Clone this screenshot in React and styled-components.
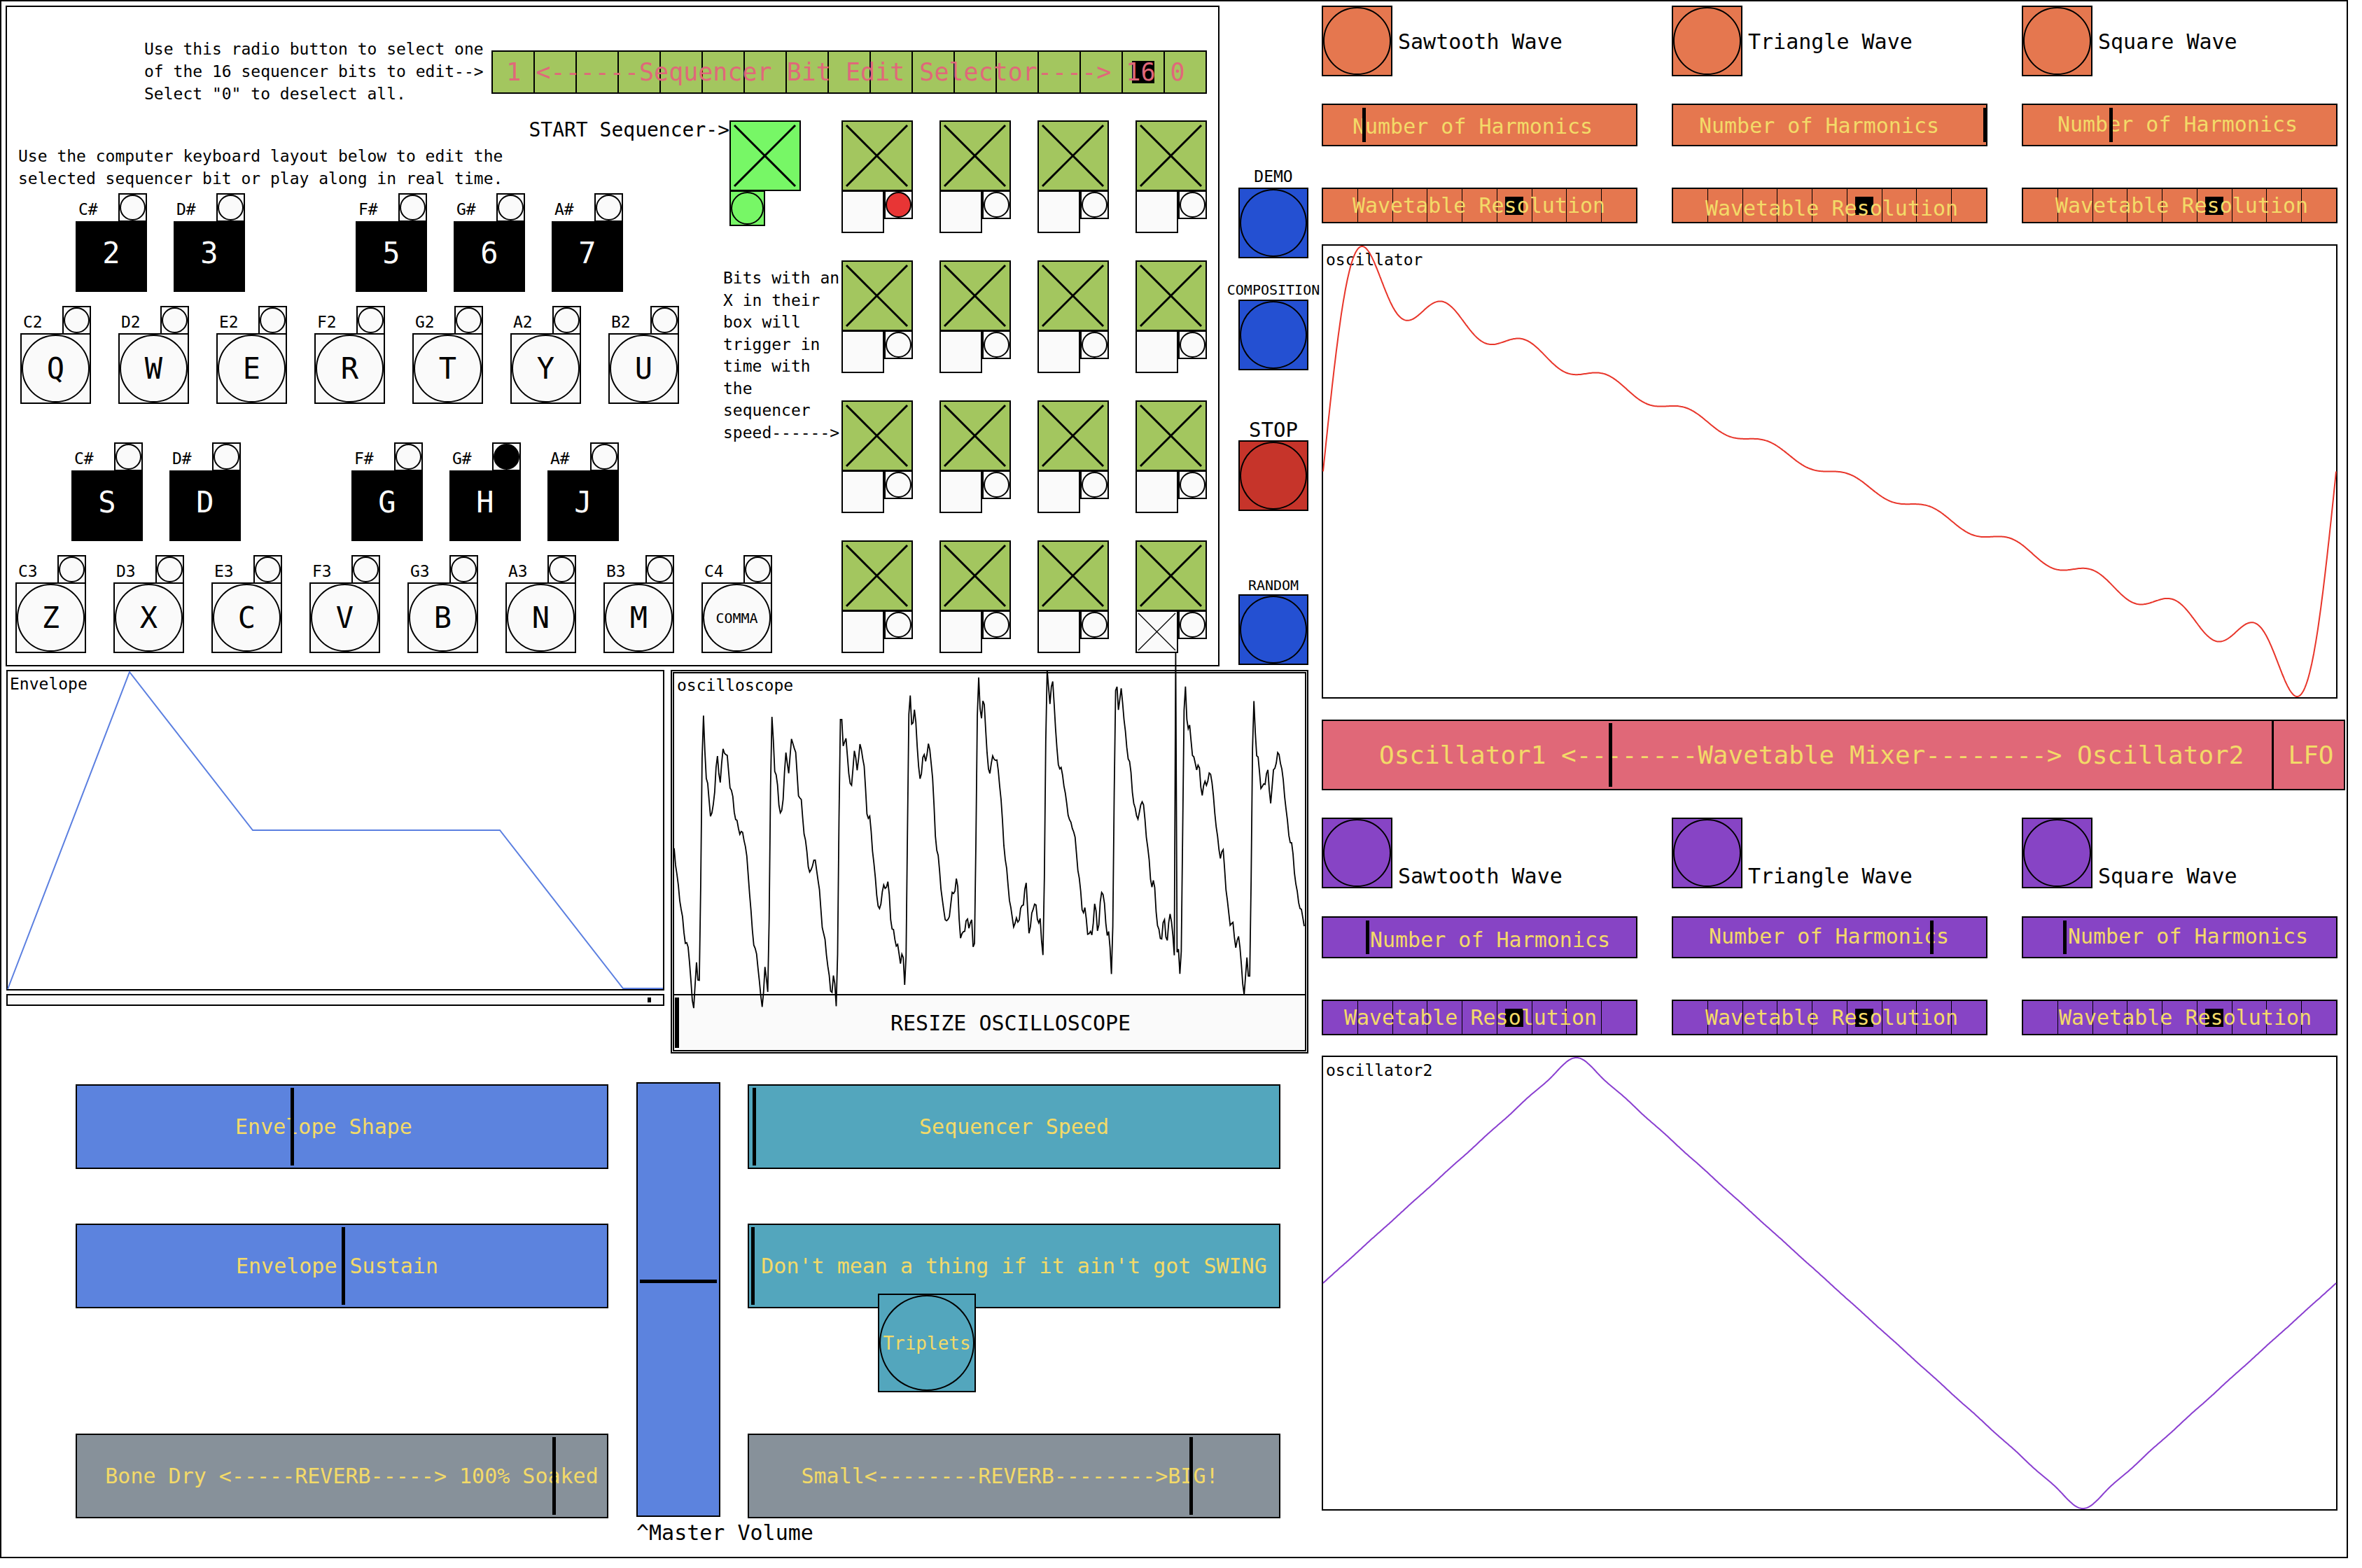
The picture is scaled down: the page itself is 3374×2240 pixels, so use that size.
import React from "react";
import styled, { createGlobalStyle } from "styled-components";

const C = {
  orange: "#e5774f",
  purple: "#8744c5",
  pink: "#e06878",
  yellow: "#f3da68",
  seqGreen: "#a3c65f",
  startGreen: "#77f766",
  btnBlue: "#2450d2",
  stopRed: "#c6342a",
  redDot: "#e83535",
  sliderBlue: "#5c83de",
  teal: "#53a6bd",
  gray: "#87919a",
  light: "#fafafa",
  selText: "#e0687a",
  envLine: "#5b7fe0",
  oscRed: "#e8352a",
  oscPurple: "#8a3fd0",
};

const Global = createGlobalStyle`
  html, body { margin: 0; padding: 0; background: #fff; }
  body { font-family: "DejaVu Sans Mono", "Liberation Mono", monospace; color: #000; }
  * { box-sizing: border-box; }
`;

/* ---------- computed drawings ---------- */
const SAW_PATH = (() => {
  const W = 1447, H = 645, N = 12, S = 1000;
  const vals = [];
  for (let i = 0; i <= S; i++) {
    const th = (2 * Math.PI * i) / S;
    let v = 0;
    for (let k = 1; k <= N; k++) v += Math.sin(k * th) / k;
    vals.push(v);
  }
  const m = Math.max(...vals.map(Math.abs));
  return vals
    .map((v, i) => `${i ? "L" : "M"}${((i / S) * W).toFixed(1)},${(H / 2 - (v / m) * (H / 2 - 1)).toFixed(1)}`)
    .join("");
})();

const TRI_PATH = (() => {
  const W = 1447, H = 646, S = 800;
  const vals = [];
  for (let i = 0; i <= S; i++) {
    const th = (2 * Math.PI * i) / S;
    let v = 0;
    for (let n = 1; n <= 25; n += 2) v += (((n - 1) / 2) % 2 ? -1 : 1) * Math.sin(n * th) / (n * n);
    vals.push(v);
  }
  const m = Math.max(...vals.map(Math.abs));
  return vals
    .map((v, i) => `${i ? "L" : "M"}${((i / S) * W).toFixed(1)},${(H / 2 - (v / m) * (H / 2 - 1)).toFixed(1)}`)
    .join("");
})();

const SCOPE_PATH = (() => {
  const W = 903;
  let s = 98765;
  const rnd = () => {
    s = (s * 16807) % 2147483647;
    return s / 2147483647;
  };
  const K = 14;
  const amps = Array.from({ length: K }, (_, k) => (1 / (k + 1)) * (0.6 + 0.9 * rnd()));
  const ph = Array.from({ length: K }, () => (rnd() - 0.5) * 1.2);
  const pts = [];
  for (let x = 0; x <= W; x += 2) {
    const th = (2 * Math.PI * (x + 60)) / 98.5;
    let v = 0;
    for (let k = 1; k <= K; k++) {
      v += amps[k - 1] * Math.sin(k * th + ph[k - 1] * Math.sin(x / 140 + k));
    }
    v += 0.22 * Math.sin((2 * Math.PI * x) / 33 + 0.7 * Math.sin(x / 57));
    pts.push([x, v]);
  }
  const m = Math.max(...pts.map((p) => Math.abs(p[1])));
  return pts
    .map(([x, v], i) => {
      let y = 245 - (v / m) * 250;
      if (x === 718) y = -30;
      return `${i ? "L" : "M"}${x},${y.toFixed(1)}`;
    })
    .join("");
})();

/* ---------- shared primitives ---------- */
const Ellipse = styled.div`
  width: 100%;
  height: 100%;
  border-radius: 50%;
  border: 2px solid #000;
  background: ${(p) => p.$fill || "transparent"};
  display: flex;
  align-items: center;
  justify-content: center;
`;

const CrossSvg = styled.svg`
  display: block;
  width: 100%;
  height: 100%;
`;

function Cross({ thin }) {
  return thin ? (
    <CrossSvg viewBox="0 0 57 57" preserveAspectRatio="none">
      <line x1="2" y1="2" x2="55" y2="55" stroke="#000" strokeWidth="1.3" />
      <line x1="55" y1="2" x2="2" y2="55" stroke="#000" strokeWidth="1.3" />
    </CrossSvg>
  ) : (
    <CrossSvg viewBox="0 0 98 97" preserveAspectRatio="none">
      <line x1="5" y1="5" x2="92" y2="92" stroke="#000" strokeWidth="3" />
      <line x1="92" y1="5" x2="5" y2="92" stroke="#000" strokeWidth="3" />
    </CrossSvg>
  );
}

/* ---------- layout ---------- */
const Frame = styled.div`
  width: 3354px;
  height: 2226px;
  border: 2px solid #000;
  display: flex;
  align-items: flex-start;
  background: #fff;
`;

const LeftCol = styled.div`
  width: 1886px;
  flex-shrink: 0;
  display: flex;
  flex-direction: column;
`;

const TopRow = styled.div`
  display: flex;
  align-items: flex-start;
  margin: 6px 0 0 6px;
`;

const Panel = styled.div`
  width: 1734px;
  height: 944px;
  border: 2px solid #000;
  display: flex;
  flex-direction: column;
  flex-shrink: 0;
`;

const HeaderRow = styled.div`
  display: flex;
  align-items: flex-start;
  padding-left: 196px;
  margin-top: 44px;
`;

const InstrText = styled.div`
  width: 496px;
  font-size: 23px;
  line-height: 32px;
  white-space: pre;
`;

const SelectorBar = styled.div`
  position: relative;
  margin-top: 18px;
  width: 1022px;
  height: 62px;
  border: 2px solid #000;
  background: ${C.seqGreen};
  display: flex;
`;

const SelectorCell = styled.div`
  flex: 1;
  display: flex;
  align-items: center;
  justify-content: center;
  & + & {
    border-left: 2px solid #000;
  }
`;

const SelectorMark = styled.div`
  width: 32px;
  height: 32px;
  background: #000;
`;

const SelectorText = styled.div`
  position: absolute;
  inset: 0;
  display: flex;
  align-items: center;
  justify-content: center;
  padding-right: 10px;
  color: ${C.selText};
  font-size: 35px;
  white-space: pre;
`;

const BodyRow = styled.div`
  display: flex;
  align-items: flex-start;
`;

const KeyboardCol = styled.div`
  width: 1022px;
  flex-shrink: 0;
  display: flex;
  flex-direction: column;
`;

const Hint = styled.div`
  margin: 57px 0 0 16px;
  font-size: 23px;
  line-height: 32px;
  white-space: pre;
`;

const KeyRow = styled.div`
  display: flex;
  margin-top: ${(p) => p.$mt}px;
  padding-left: ${(p) => p.$pl}px;
  gap: ${(p) => p.$gap}px;
`;

const KeyUnit = styled.div`
  width: ${(p) => p.$w}px;
  margin-left: ${(p) => p.$ml || 0}px;
  flex-shrink: 0;
  display: flex;
  flex-direction: column;
`;

const KeyTop = styled.div`
  display: flex;
  justify-content: space-between;
  align-items: center;
  height: 41px;
`;

const NoteLabel = styled.span`
  font-size: 23px;
  line-height: 23px;
  padding: 5px 0 0 4px;
`;

const KeyRadio = styled.div`
  width: 41px;
  height: 41px;
  border: 2px solid #000;
  background: ${C.light};
`;

const BlackKey = styled.div`
  height: 101px;
  margin-top: -1px;
  background: #000;
  color: #fff;
  display: flex;
  align-items: center;
  justify-content: center;
  padding-bottom: 10px;
  font-size: 42px;
`;

const WhiteKey = styled.div`
  height: 101px;
  margin-top: -2px;
  border: 2px solid #000;
  background: ${C.light};
`;

const KeyLetter = styled.span`
  font-size: ${(p) => p.$fs || 42}px;
`;

const SeqGrid = styled.div`
  margin-top: 22px;
  display: grid;
  grid-template-columns: 132px repeat(4, 102px);
  grid-template-rows: repeat(4, 160px);
  column-gap: 38px;
  row-gap: 40px;
`;

const StartLead = styled.div`
  grid-column: 1;
  grid-row: 1;
  display: flex;
  justify-content: flex-end;
  align-items: flex-start;
`;

const StartLabel = styled.span`
  flex-shrink: 0;
  white-space: nowrap;
  font-size: 28px;
  line-height: 28px;
`;

const StartUnit = styled.div`
  flex-shrink: 0;
  width: 102px;
  margin-right: 20px;
  display: flex;
  flex-direction: column;
`;

const StartBox = styled.div`
  height: 101px;
  border: 2px solid #000;
  background: ${C.startGreen};
`;

const StartRadio = styled.div`
  width: 51px;
  height: 51px;
  margin-top: -1px;
  border: 2px solid #000;
  background: ${C.startGreen};
`;

const BitsText = styled.div`
  grid-column: 1;
  grid-row: 2 / span 3;
  margin-top: 10px;
  padding-left: 1px;
  font-size: 23px;
  line-height: 31.5px;
  white-space: pre;
`;

const CellUnit = styled.div`
  grid-column: ${(p) => p.$col};
  grid-row: ${(p) => p.$row};
  display: flex;
  flex-direction: column;
`;

const CellBox = styled.div`
  height: 101px;
  border: 2px solid #000;
  background: ${C.seqGreen};
`;

const CellBottom = styled.div`
  display: flex;
  align-items: flex-start;
  margin-top: -1px;
`;

const CellPad = styled.div`
  width: 61px;
  height: 61px;
  border: 2px solid #000;
  background: ${C.light};
`;

const CellRadio = styled.div`
  width: 41px;
  height: 41px;
  border: 2px solid #000;
  background: ${C.light};
`;

const SideCol = styled.div`
  margin-left: 11px;
  width: 132px;
  flex-shrink: 0;
  display: flex;
  flex-direction: column;
  align-items: center;
`;

const SideGroup = styled.div`
  margin-top: ${(p) => p.$mt}px;
  display: flex;
  flex-direction: column;
  align-items: center;
`;

const SideLabel = styled.div`
  font-size: ${(p) => p.$fs}px;
  line-height: ${(p) => p.$fs}px;
  margin-bottom: ${(p) => p.$mb}px;
  white-space: nowrap;
`;

const SideButton = styled.div`
  width: 100px;
  height: 101px;
  border: 2px solid #000;
  background: ${(p) => p.$bg};
`;

const MidRow = styled.div`
  display: flex;
  align-items: flex-start;
  margin-top: 5px;
  padding-left: 7px;
`;

const EnvCol = styled.div`
  width: 940px;
  flex-shrink: 0;
  display: flex;
  flex-direction: column;
`;

const ChartBox = styled.div`
  position: relative;
  width: ${(p) => (p.$w ? `${p.$w}px` : "100%")};
  height: ${(p) => p.$h}px;
  margin-top: ${(p) => p.$mt || 0}px;
  border: 2px solid #000;
  background: #fff;
  flex-shrink: 0;
`;

const ChartLabel = styled.div`
  font-size: 23px;
  line-height: 27.6px;
  padding: ${(p) => p.$pt}px 0 0 ${(p) => p.$pl}px;
`;

const Plot = styled.svg`
  position: absolute;
  left: 0;
  top: 0;
  width: 100%;
  height: 100%;
  overflow: visible;
`;

const EnvScroll = styled.div`
  margin-top: 5px;
  height: 17px;
  border: 2px solid #000;
  background: ${C.light};
  display: flex;
  justify-content: flex-end;
  align-items: center;
  padding-right: 17px;
`;

const EnvScrollMark = styled.div`
  width: 5px;
  height: 7px;
  background: #000;
`;

const ScopeOuter = styled.div`
  margin-left: 9px;
  width: 911px;
  height: 548px;
  border: 2px solid #000;
  padding: 1px;
  flex-shrink: 0;
`;

const ScopeInner = styled.div`
  height: 100%;
  border: 2px solid #000;
  display: flex;
  flex-direction: column;
`;

const ScopeArea = styled.div`
  position: relative;
  flex: 1;
  border-bottom: 2px solid #000;
`;

const ResizeBar = styled.div`
  height: 78px;
  background: ${C.light};
  display: flex;
  align-items: center;
`;

const ResizeThumb = styled.div`
  width: 6px;
  height: 72px;
  margin-left: 1px;
  background: #000;
`;

const ResizeText = styled.span`
  margin-left: 302px;
  font-size: 30px;
  white-space: pre;
`;

const BottomRow = styled.div`
  display: flex;
  align-items: flex-start;
  margin-top: 41px;
  padding-left: 106px;
`;

const SliderCol = styled.div`
  width: 761px;
  margin-left: ${(p) => p.$ml || 0}px;
  margin-top: 3px;
  flex-shrink: 0;
  display: flex;
  flex-direction: column;
`;

const HSlider = styled.div`
  position: relative;
  width: ${(p) => p.$w}px;
  height: ${(p) => p.$h}px;
  margin-top: ${(p) => p.$mt || 0}px;
  border: 2px solid #000;
  background: ${(p) => p.$bg};
  display: flex;
  align-items: center;
  justify-content: center;
  flex-shrink: 0;
`;

const SliderText = styled.span`
  color: ${C.yellow};
  font-size: ${(p) => p.$fs || 30}px;
  white-space: pre;
  transform: translate(${(p) => p.$dx || 0}px, ${(p) => p.$dy || 0}px);
`;

const Thumb = styled.div`
  position: absolute;
  top: ${(p) => p.$inset}px;
  bottom: ${(p) => p.$inset}px;
  width: 5px;
  background: #000;
`;

const MasterCol = styled.div`
  margin-left: 40px;
  width: 120px;
  flex-shrink: 0;
  display: flex;
  flex-direction: column;
`;

const VSlider = styled.div`
  position: relative;
  height: 621px;
  border: 2px solid #000;
  background: ${C.sliderBlue};
`;

const VThumb = styled.div`
  position: absolute;
  left: 3px;
  right: 3px;
  height: 5px;
  background: #000;
`;

const MasterLabel = styled.div`
  margin-top: 8px;
  font-size: 30px;
  line-height: 30px;
  white-space: nowrap;
`;

const TripletsBox = styled.div`
  position: relative;
  width: 140px;
  height: 141px;
  margin: -21px 0 0 186px;
  border: 2px solid #000;
  background: ${C.teal};
`;

const TripletsText = styled.span`
  color: ${C.yellow};
  font-size: 26px;
`;

const RightCol = styled.div`
  flex: 1;
  display: flex;
  flex-direction: column;
  padding-top: 6px;
`;

const WaveRow = styled.div`
  display: flex;
  margin-top: ${(p) => p.$mt}px;
`;

const WaveOption = styled.div`
  width: 500px;
  flex-shrink: 0;
  display: flex;
  align-items: ${(p) => p.$align};
`;

const WaveBox = styled.div`
  width: 101px;
  height: 101px;
  border: 2px solid #000;
  background: ${(p) => p.$bg};
  flex-shrink: 0;
`;

const WaveLabel = styled.span`
  margin-left: 8px;
  font-size: 30px;
  line-height: 30px;
  white-space: pre;
  padding-top: ${(p) => p.$pt || 0}px;
  padding-bottom: ${(p) => p.$pb || 0}px;
`;

const BarRow = styled.div`
  display: flex;
  gap: 49px;
  margin-top: ${(p) => p.$mt}px;
`;

const WtBar = styled.div`
  position: relative;
  width: 451px;
  height: 51px;
  border: 2px solid #000;
  background: ${(p) => p.$bg};
  display: flex;
  flex-shrink: 0;
`;

const WtCell = styled.div`
  flex: 1;
  display: flex;
  align-items: center;
  justify-content: center;
  & + & {
    border-left: 1px solid #000;
  }
`;

const WtMark = styled.div`
  width: 26px;
  height: 26px;
  background: #000;
`;

const BarTextLayer = styled.div`
  position: absolute;
  inset: 0;
  display: flex;
  align-items: center;
  justify-content: center;
`;

const Mixer = styled.div`
  margin-top: 30px;
  width: 1462px;
  height: 101px;
  border: 2px solid #000;
  background: ${C.pink};
  display: flex;
`;

const MixMain = styled.div`
  position: relative;
  flex: 1;
  display: flex;
  align-items: center;
  padding-left: 80px;
`;

const MixText = styled.span`
  color: ${C.yellow};
  font-size: 36px;
  white-space: pre;
`;

const MixLfo = styled.div`
  width: 103px;
  border-left: 3px solid #000;
  display: flex;
  align-items: center;
  justify-content: center;
  color: ${C.yellow};
  font-size: 36px;
  padding-left: 6px;
`;

/* ---------- data ---------- */
const BLACK1 = [
  ["C#", "2"],
  ["D#", "3"],
  ["F#", "5", 120],
  ["G#", "6"],
  ["A#", "7"],
];
const BLACK2 = [
  ["C#", "S"],
  ["D#", "D"],
  ["F#", "G", 120],
  ["G#", "H", 0, true],
  ["A#", "J"],
];
const WHITE1 = [
  ["C2", "Q"],
  ["D2", "W"],
  ["E2", "E"],
  ["F2", "R"],
  ["G2", "T"],
  ["A2", "Y"],
  ["B2", "U"],
];
const WHITE2 = [
  ["C3", "Z"],
  ["D3", "X"],
  ["E3", "C"],
  ["F3", "V"],
  ["G3", "B"],
  ["A3", "N"],
  ["B3", "M"],
  ["C4", "COMMA", 0, false, 20],
];

const WAVES = ["Sawtooth Wave", "Triangle Wave", "Square Wave"];
const HARM1 = [
  { thumb: 56, dx: -10, dy: 2 },
  { thumb: 443, dx: -15, dy: 1 },
  { thumb: 123, dx: -3, dy: -1 },
];
const HARM2 = [
  { thumb: 61, dx: 15, dy: 3 },
  { thumb: 367, dx: -1, dy: -2 },
  { thumb: 57, dx: 12, dy: -2 },
];
const WT1 = [{ dx: -1, dy: 0 }, { dx: 3, dy: 4 }, { dx: 3, dy: 0 }];
const WT2 = [{ dx: -13, dy: 0 }, { dx: 3, dy: 0 }, { dx: 8, dy: 0 }];

function BlackKeyItem({ note, keyName, ml, on }) {
  return (
    <KeyUnit $w={102} $ml={ml}>
      <KeyTop>
        <NoteLabel>{note}</NoteLabel>
        <KeyRadio>
          <Ellipse $fill={on ? "#000" : C.light} />
        </KeyRadio>
      </KeyTop>
      <BlackKey>{keyName}</BlackKey>
    </KeyUnit>
  );
}

function WhiteKeyItem({ note, keyName, fs }) {
  return (
    <KeyUnit $w={101}>
      <KeyTop>
        <NoteLabel>{note}</NoteLabel>
        <KeyRadio>
          <Ellipse $fill={C.light} />
        </KeyRadio>
      </KeyTop>
      <WhiteKey>
        <Ellipse $fill={C.light}>
          <KeyLetter $fs={fs}>{keyName}</KeyLetter>
        </Ellipse>
      </WhiteKey>
    </KeyUnit>
  );
}

function SeqCell({ row, col, red, marked }) {
  return (
    <CellUnit $row={row + 1} $col={col + 2}>
      <CellBox>
        <Cross />
      </CellBox>
      <CellBottom>
        <CellPad>{marked && <Cross thin />}</CellPad>
        <CellRadio>
          <Ellipse $fill={red ? C.redDot : C.light} />
        </CellRadio>
      </CellBottom>
    </CellUnit>
  );
}

function HarmSlider({ bg, h, thumb, dx, dy }) {
  return (
    <HSlider $w={451} $h={h} $bg={bg}>
      <SliderText $dx={dx} $dy={dy}>Number of Harmonics</SliderText>
      <Thumb $inset={4} style={{ left: thumb }} />
    </HSlider>
  );
}

function WavetableBar({ bg, dx, dy }) {
  return (
    <WtBar $bg={bg}>
      {Array.from({ length: 9 }).map((_, i) => (
        <WtCell key={i}>{i === 5 && <WtMark />}</WtCell>
      ))}
      <BarTextLayer>
        <SliderText $dx={dx} $dy={dy}>Wavetable Resolution</SliderText>
      </BarTextLayer>
    </WtBar>
  );
}

export default function App() {
  return (
    <>
      <Global />
      <Frame>
        <LeftCol>
          <TopRow>
            <Panel>
              <HeaderRow>
                <InstrText>
                  {'Use this radio button to select one\nof the 16 sequencer bits to edit-->\nSelect "0" to deselect all.'}
                </InstrText>
                <SelectorBar>
                  {Array.from({ length: 17 }).map((_, i) => (
                    <SelectorCell key={i}>{i === 15 && <SelectorMark />}</SelectorCell>
                  ))}
                  <SelectorText>{"1 <------Sequencer Bit Edit Selector----> 16 0"}</SelectorText>
                </SelectorBar>
              </HeaderRow>
              <BodyRow>
                <KeyboardCol>
                  <Hint>
                    {"Use the computer keyboard layout below to edit the\nselected sequencer bit or play along in real time."}
                  </Hint>
                  <KeyRow $mt={5} $pl={98} $gap={38}>
                    {BLACK1.map(([n, k, ml]) => (
                      <BlackKeyItem key={n} note={n} keyName={k} ml={ml} />
                    ))}
                  </KeyRow>
                  <KeyRow $mt={20} $pl={19} $gap={39}>
                    {WHITE1.map(([n, k]) => (
                      <WhiteKeyItem key={n} note={n} keyName={k} />
                    ))}
                  </KeyRow>
                  <KeyRow $mt={55} $pl={92} $gap={38}>
                    {BLACK2.map(([n, k, ml, on]) => (
                      <BlackKeyItem key={n} note={n} keyName={k} ml={ml} on={on} />
                    ))}
                  </KeyRow>
                  <KeyRow $mt={20} $pl={12} $gap={39}>
                    {WHITE2.map(([n, k, , , fs]) => (
                      <WhiteKeyItem key={n} note={n} keyName={k} fs={fs} />
                    ))}
                  </KeyRow>
                </KeyboardCol>
                <SeqGrid>
                  <StartLead>
                    <StartLabel>{"START Sequencer->"}</StartLabel>
                    <StartUnit>
                      <StartBox>
                        <Cross />
                      </StartBox>
                      <StartRadio>
                        <Ellipse $fill={C.startGreen} />
                      </StartRadio>
                    </StartUnit>
                  </StartLead>
                  <BitsText>
                    {"Bits with an\nX in their\nbox will\ntrigger in\ntime with\nthe\nsequencer\nspeed------>"}
                  </BitsText>
                  {[0, 1, 2, 3].map((r) =>
                    [0, 1, 2, 3].map((c) => (
                      <SeqCell
                        key={`${r}-${c}`}
                        row={r}
                        col={c}
                        red={r === 0 && c === 0}
                        marked={r === 3 && c === 3}
                      />
                    ))
                  )}
                </SeqGrid>
              </BodyRow>
            </Panel>
            <SideCol>
              <SideGroup $mt={233}>
                <SideLabel $fs={23} $mb={4}>DEMO</SideLabel>
                <SideButton $bg={C.btnBlue}>
                  <Ellipse />
                </SideButton>
              </SideGroup>
              <SideGroup $mt={35}>
                <SideLabel $fs={20} $mb={4}>COMPOSITION</SideLabel>
                <SideButton $bg={C.btnBlue}>
                  <Ellipse />
                </SideButton>
              </SideGroup>
              <SideGroup $mt={71}>
                <SideLabel $fs={29} $mb={0}>STOP</SideLabel>
                <SideButton $bg={C.stopRed}>
                  <Ellipse />
                </SideButton>
              </SideGroup>
              <SideGroup $mt={96}>
                <SideLabel $fs={20} $mb={3}>RANDOM</SideLabel>
                <SideButton $bg={C.btnBlue}>
                  <Ellipse />
                </SideButton>
              </SideGroup>
            </SideCol>
          </TopRow>

          <MidRow>
            <EnvCol>
              <ChartBox $h={458}>
                <ChartLabel $pt={5} $pl={3}>Envelope</ChartLabel>
                <Plot viewBox="0 0 936 454" preserveAspectRatio="none">
                  <path
                    d="M0,454 L174,1 L350,227 L703,227 L879,453 L936,453"
                    fill="none"
                    stroke={C.envLine}
                    strokeWidth="2"
                  />
                </Plot>
              </ChartBox>
              <EnvScroll>
                <EnvScrollMark />
              </EnvScroll>
            </EnvCol>
            <ScopeOuter>
              <ScopeInner>
                <ScopeArea>
                  <ChartLabel $pt={4} $pl={4}>oscilloscope</ChartLabel>
                  <Plot viewBox="0 0 903 458" preserveAspectRatio="none">
                    <path d={SCOPE_PATH} fill="none" stroke="#000" strokeWidth="1.8" />
                  </Plot>
                </ScopeArea>
                <ResizeBar>
                  <ResizeThumb />
                  <ResizeText>RESIZE OSCILLOSCOPE</ResizeText>
                </ResizeBar>
              </ScopeInner>
            </ScopeOuter>
          </MidRow>

          <BottomRow>
            <SliderCol>
              <HSlider $w={761} $h={121} $bg={C.sliderBlue}>
                <SliderText $dx={-26}>Envelope Shape</SliderText>
                <Thumb $inset={3} style={{ left: 305 }} />
              </HSlider>
              <HSlider $w={761} $h={121} $mt={78} $bg={C.sliderBlue}>
                <SliderText $dx={-7}>Envelope Sustain</SliderText>
                <Thumb $inset={3} style={{ left: 378 }} />
              </HSlider>
              <HSlider $w={761} $h={121} $mt={179} $bg={C.gray}>
                <SliderText $dx={14}>{"Bone Dry <-----REVERB-----> 100% Soaked"}</SliderText>
                <Thumb $inset={3} style={{ left: 679 }} />
              </HSlider>
            </SliderCol>
            <MasterCol>
              <VSlider>
                <VThumb style={{ top: 280 }} />
              </VSlider>
              <MasterLabel>^Master Volume</MasterLabel>
            </MasterCol>
            <SliderCol $ml={39}>
              <HSlider $w={761} $h={121} $bg={C.teal}>
                <SliderText>Sequencer Speed</SliderText>
                <Thumb $inset={3} style={{ left: 5 }} />
              </HSlider>
              <HSlider $w={761} $h={121} $mt={78} $bg={C.teal}>
                <SliderText>{"Don't mean a thing if it ain't got SWING"}</SliderText>
                <Thumb $inset={3} style={{ left: 3 }} />
              </HSlider>
              <TripletsBox>
                <Ellipse>
                  <TripletsText>Triplets</TripletsText>
                </Ellipse>
              </TripletsBox>
              <HSlider $w={761} $h={121} $mt={59} $bg={C.gray}>
                <SliderText $dx={-6}>{"Small<--------REVERB-------->BIG!"}</SliderText>
                <Thumb $inset={3} style={{ left: 629 }} />
              </HSlider>
            </SliderCol>
          </BottomRow>
        </LeftCol>

        <RightCol>
          <WaveRow $mt={0}>
            {WAVES.map((w) => (
              <WaveOption key={w} $align="center">
                <WaveBox $bg={C.orange}>
                  <Ellipse />
                </WaveBox>
                <WaveLabel $pt={3}>{w}</WaveLabel>
              </WaveOption>
            ))}
          </WaveRow>
          <BarRow $mt={39}>
            {HARM1.map((h, i) => (
              <HarmSlider key={i} bg={C.orange} h={61} {...h} />
            ))}
          </BarRow>
          <BarRow $mt={59}>
            {WT1.map((w, i) => (
              <WavetableBar key={i} bg={C.orange} {...w} />
            ))}
          </BarRow>
          <ChartBox $w={1451} $h={649} $mt={30}>
            <ChartLabel $pt={7} $pl={4}>oscillator</ChartLabel>
            <Plot viewBox="0 0 1447 645" preserveAspectRatio="none">
              <path d={SAW_PATH} fill="none" stroke={C.oscRed} strokeWidth="2" />
            </Plot>
          </ChartBox>
          <Mixer>
            <MixMain>
              <MixText>{"Oscillator1 <--------Wavetable Mixer--------> Oscillator2"}</MixText>
              <Thumb $inset={3} style={{ left: 408 }} />
            </MixMain>
            <MixLfo>LFO</MixLfo>
          </Mixer>
          <WaveRow $mt={39}>
            {WAVES.map((w) => (
              <WaveOption key={w} $align="flex-end">
                <WaveBox $bg={C.purple}>
                  <Ellipse />
                </WaveBox>
                <WaveLabel $pb={2}>{w}</WaveLabel>
              </WaveOption>
            ))}
          </WaveRow>
          <BarRow $mt={40}>
            {HARM2.map((h, i) => (
              <HarmSlider key={i} bg={C.purple} h={60} {...h} />
            ))}
          </BarRow>
          <BarRow $mt={59}>
            {WT2.map((w, i) => (
              <WavetableBar key={i} bg={C.purple} {...w} />
            ))}
          </BarRow>
          <ChartBox $w={1451} $h={650} $mt={29}>
            <ChartLabel $pt={6} $pl={4}>oscillator2</ChartLabel>
            <Plot viewBox="0 0 1447 646" preserveAspectRatio="none">
              <path d={TRI_PATH} fill="none" stroke={C.oscPurple} strokeWidth="2" />
            </Plot>
          </ChartBox>
        </RightCol>
      </Frame>
    </>
  );
}
